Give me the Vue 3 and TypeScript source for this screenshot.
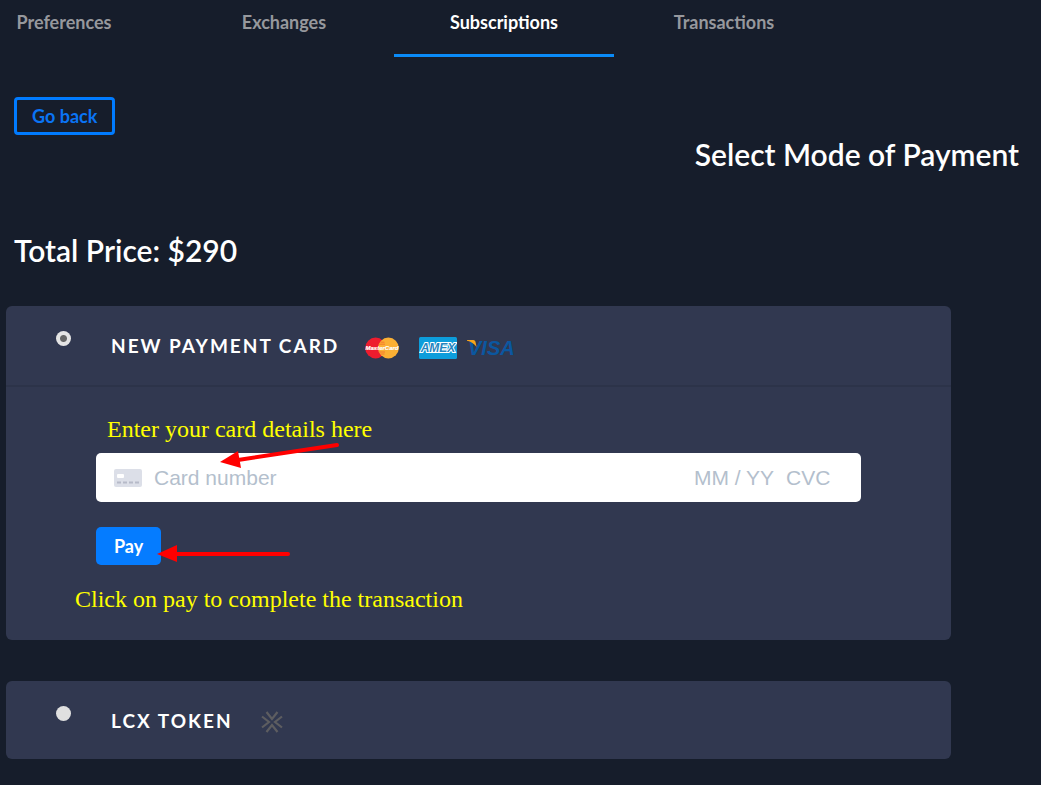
<script setup lang="ts">
import { ref } from 'vue'

const tabs: string[] = ['Preferences', 'Exchanges', 'Subscriptions', 'Transactions']
const activeTab = ref<string>('Subscriptions')
const method = ref<'card' | 'lcx'>('card')
const cardNumber = ref('')
const expiry = ref('')
const cvc = ref('')
</script>

<template>
  <main class="page">
    <nav class="tabs" aria-label="Account sections">
      <button
        v-for="tab in tabs"
        :key="tab"
        type="button"
        class="tab"
        :class="{ active: tab === activeTab }"
        @click="activeTab = tab"
      >
        {{ tab }}
      </button>
    </nav>

    <button type="button" class="back">Go back</button>
    <h1 class="title">Select Mode of Payment</h1>
    <h2 class="total">Total Price: $290</h2>

    <section class="card">
      <header class="card-head ruled">
        <input id="method-card" v-model="method" class="radio" type="radio" name="method" value="card" />
        <label class="name" for="method-card">NEW PAYMENT CARD</label>
        <span class="brands">
          <svg class="mastercard" width="34" height="22" viewBox="0 0 34 22" aria-hidden="true">
            <circle cx="10.600" cy="11" r="10.400" fill="#ee1c2e" />
            <circle cx="23.400" cy="11" r="10.400" fill="#fbb034" />
            <path d="M15.500 5.200h4M14 7.200h6M14 15h6M15.500 17h4" stroke="#f47a2c" stroke-width="1" />
            <text x="17" y="13.200" text-anchor="middle" class="mc-text">MasterCard</text>
          </svg>
          <svg class="amex" width="38" height="22" viewBox="0 0 38 22" aria-hidden="true">
            <rect width="38" height="22" rx="1.500" fill="#0d9ddb" />
            <text x="19" y="15" text-anchor="middle" class="amex-text">AMEX</text>
          </svg>
          <svg class="visa" width="50" height="28" viewBox="0 0 50 28" aria-hidden="true">
            <text x="1" y="21" class="visa-text">VISA</text>
            <path d="M0 6h6.400q1.600 0 2 1.500l1.200 5.500Q6 8 0 6.800z" fill="#f9a51a" />
          </svg>
        </span>
      </header>

      <div class="card-body">
        <div class="field">
          <svg class="card-icon" width="28" height="18" viewBox="0 0 28 18" aria-hidden="true">
            <rect width="28" height="18" rx="2" fill="#dcdfe8" />
            <rect x="3" y="5" width="7" height="4" rx="1" fill="#fff" />
            <path d="M3 13.500h22" stroke="#b6bac8" stroke-width="2" stroke-dasharray="4 2" />
          </svg>
          <input v-model="cardNumber" class="number" type="text" aria-label="Card number" placeholder="Card number" />
          <input v-model="expiry" class="expiry" type="text" aria-label="Expiry date" placeholder="MM / YY" />
          <input v-model="cvc" class="cvc" type="text" aria-label="CVC" placeholder="CVC" />
        </div>
        <button type="button" class="pay">Pay</button>

        <p class="note note-card">Enter your card details here</p>
        <svg class="arrow arrow-card" width="122" height="28" viewBox="0 0 122 28" aria-hidden="true">
          <path d="M117 3 18 18" stroke="#f00" stroke-width="4" stroke-linecap="round" />
          <path d="M0 20 18 9l3 17z" fill="#f00" />
        </svg>
        <p class="note note-pay">Click on pay to complete the transaction</p>
        <svg class="arrow arrow-pay" width="134" height="18" viewBox="0 0 134 18" aria-hidden="true">
          <path d="M131 9H18" stroke="#f00" stroke-width="4" stroke-linecap="round" />
          <path d="M0 9 20 0v17z" fill="#f00" />
        </svg>
      </div>
    </section>

    <section class="card">
      <header class="card-head">
        <input id="method-lcx" v-model="method" class="radio" type="radio" name="method" value="lcx" />
        <label class="name" for="method-lcx">LCX TOKEN</label>
        <svg class="lcx" width="22" height="22" viewBox="0 0 22 22" aria-hidden="true">
          <path d="M5.500 1l5.500 7 5.500-7M5.500 21l5.500-7 5.500 7M1 5.500l7 5.500-7 5.500M21 5.500l-7 5.500 7 5.500" fill="none" stroke="#5d5d60" stroke-width="2.200" />
        </svg>
      </header>
    </section>
  </main>
</template>

<style>
body {
  margin: 0;
  background: #161d2b;
}
</style>

<style scoped>
.page {
  display: flex;
  flex-direction: column;
  min-height: 100vh;
  box-sizing: border-box;
  overflow: hidden;
  color: #fff;
  font-family: Lato, "Open Sans", sans-serif;
}

button {
  font-family: inherit;
  cursor: pointer;
}

.tabs {
  display: flex;
  margin-left: -46px;
}

.tab {
  width: 220px;
  height: 57px;
  padding: 0 0 10px;
  border: 0;
  border-bottom: 3px solid transparent;
  background: none;
  color: #96989d;
  font-size: 18px;
  font-weight: 700;
}

.tab.active {
  border-bottom-color: #0a8bf8;
  color: #fff;
}

.back {
  align-self: flex-start;
  height: 38px;
  margin: 40px 0 0 14px;
  padding: 0 15px;
  border: 3px solid #007bff;
  border-radius: 4px;
  background: none;
  color: #0a74f5;
  font-size: 18px;
  font-weight: 700;
}

.title,
.total {
  margin: 0;
  font-size: 30px;
  line-height: 38px;
  font-weight: 600;
}

.title {
  margin-right: 22px;
  text-align: right;
}

.total {
  margin: 58px 0 37px 14px;
}

.card {
  margin: 0 90px 41px 6px;
  border-radius: 6px;
  background: #313850;
}

.card-head {
  display: flex;
  align-items: center;
  height: 78px;
  padding-left: 50px;
}

.ruled {
  height: 79px;
  border-bottom: 2px solid #2c3349;
}

.radio {
  appearance: none;
  width: 15px;
  height: 15px;
  margin: 0 40px 14px 0;
  border-radius: 50%;
  background: #e0e0e0;
}

.radio:checked {
  background: radial-gradient(circle, #666 3px, #e4e4e4 4px);
}

.name {
  font-size: 19px;
  font-weight: 700;
  letter-spacing: 2px;
}

.brands {
  display: flex;
  align-items: center;
  margin: 4px 0 0 26px;
}

.amex {
  margin: 0 10px 0 20px;
}

.mc-text {
  fill: #fff;
  stroke: #fff;
  stroke-width: 0.2px;
  font: italic 700 6px "Liberation Sans", sans-serif;
}

.amex-text {
  fill: #2585c0;
  stroke: #fff;
  stroke-width: 2px;
  paint-order: stroke;
  font: italic 700 12px "Liberation Sans", sans-serif;
}

.visa-text {
  fill: #0b57a0;
  font: italic 700 20px "Liberation Sans", sans-serif;
}

.lcx {
  margin: 3px 0 0 28px;
}

.card-body {
  position: relative;
  padding: 66px 90px 75px;
}

.field {
  display: flex;
  align-items: center;
  height: 49px;
  padding: 0 25px 0 18px;
  border-radius: 5px;
  background: #fff;
}

.field input {
  min-width: 0;
  padding: 0;
  border: 0;
  outline: 0;
  background: none;
  color: #32325d;
  font: 21px "Liberation Sans", Arial, sans-serif;
}

.field input::placeholder {
  color: #b4bfcd;
  opacity: 1;
}

.card-icon {
  flex: none;
}

.number {
  flex: 1;
  margin-left: 12px;
}

.expiry {
  width: 92px;
}

.cvc {
  width: 50px;
}

.pay {
  display: block;
  height: 38px;
  margin-top: 25px;
  padding: 0 18px;
  border: 0;
  border-radius: 5px;
  background: #057cff;
  color: #fff;
  font-size: 18px;
  font-weight: 700;
}

.note {
  position: absolute;
  margin: 0;
  color: #ff0;
  font: 24px/28px "Liberation Serif", "Times New Roman", serif;
  white-space: nowrap;
}

.note-card {
  top: 28px;
  left: 101px;
}

.note-pay {
  top: 198px;
  left: 69px;
}

.arrow {
  position: absolute;
}

.arrow-card {
  top: 55px;
  left: 214px;
}

.arrow-pay {
  top: 158px;
  left: 151px;
}
</style>
